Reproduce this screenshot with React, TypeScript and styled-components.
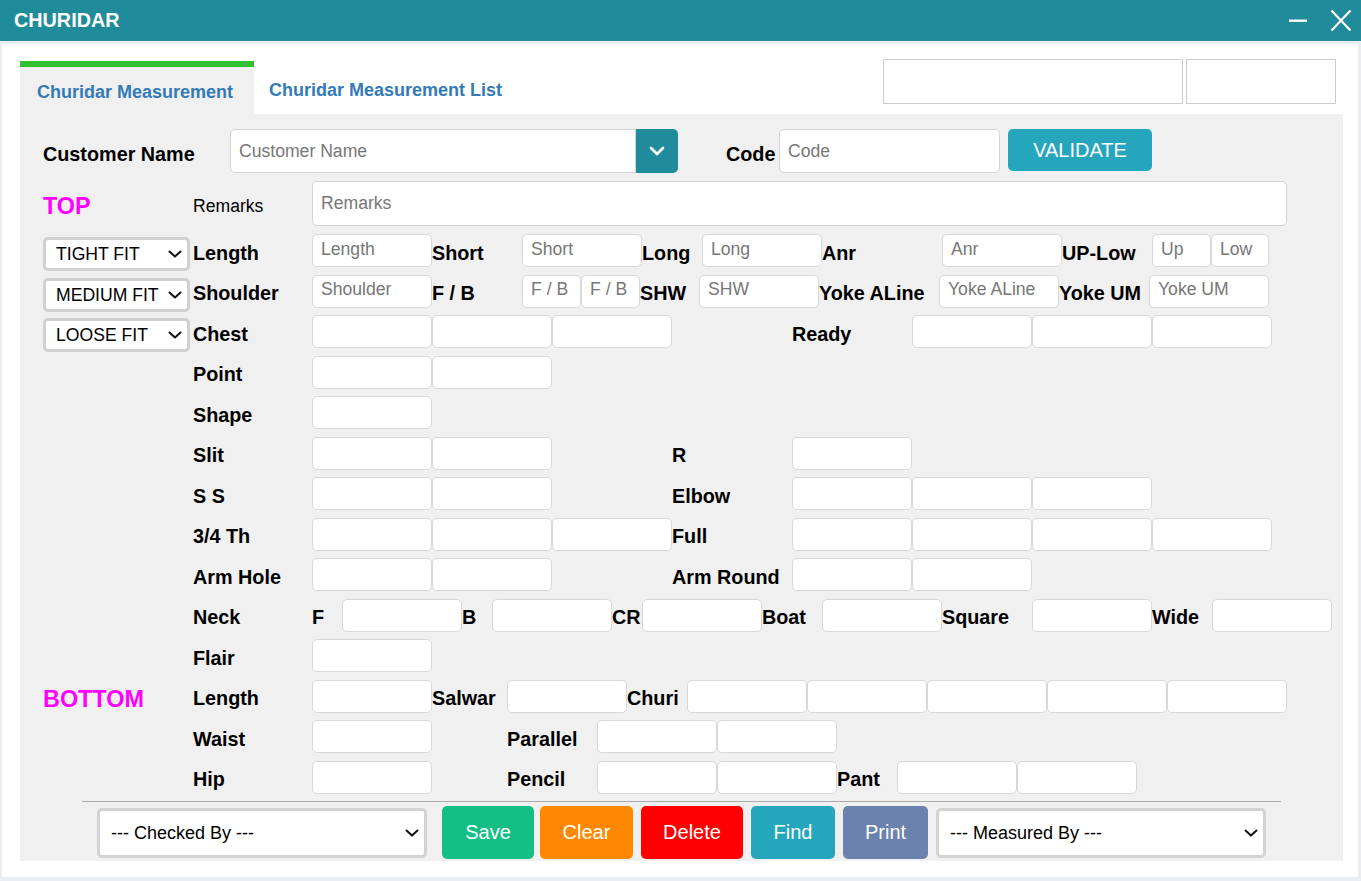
import React from "react";
import styled, { createGlobalStyle } from "styled-components";

const GlobalStyle = createGlobalStyle`
  html, body { margin: 0; padding: 0; }
  body {
    font-family: "Liberation Sans", Arial, sans-serif;
    background: #e9eef1;
  }
  * { box-sizing: border-box; }
`;

const Window = styled.div`
  width: 1361px;
  height: 881px;
  display: flex;
  flex-direction: column;
  background: #e9eef1;
`;

const TitleBar = styled.div`
  height: 41px;
  flex: none;
  background: #208b9b;
  display: flex;
  align-items: center;
  justify-content: space-between;
  padding: 0 9px 0 14px;
`;

const Title = styled.div`
  color: #fff;
  font-weight: bold;
  font-size: 19.8px;
`;

const WinControls = styled.div`
  display: flex;
  align-items: center;
  gap: 23px;
`;

const Panel = styled.div`
  flex: 1;
  margin: 3px 3px 4px 2px;
  background: #fff;
  padding: 17px 15px 16px 18px;
  display: flex;
  flex-direction: column;
`;

const TabRow = styled.div`
  display: flex;
  height: 53px;
  flex: none;
`;

const Tab = styled.div<{ $active?: boolean }>`
  width: ${(p) => (p.$active ? "234px" : "auto")};
  background: ${(p) => (p.$active ? "#f0f0f0" : "transparent")};
  border-top: ${(p) => (p.$active ? "6px solid #2fc12f" : "none")};
  color: #337ab7;
  font-weight: bold;
  font-size: 18px;
  padding: ${(p) => (p.$active ? "15px 0 0 17px" : "19px 0 0 15px")};
`;

const TopBoxes = styled.div`
  margin-left: auto;
  margin-right: 7px;
  margin-top: -2px;
  display: flex;
  gap: 3px;
  align-self: flex-start;
`;

const TopBox = styled.div<{ $w: number }>`
  width: ${(p) => p.$w}px;
  height: 45px;
  border: 1px solid #ccc;
  background: #fff;
`;

const Content = styled.div`
  flex: 1;
  width: 1323px;
  background: #f0f0f0;
  padding: 15px 0 0 23px;
  display: flex;
  flex-direction: column;
`;

const CustomerRow = styled.div`
  display: flex;
  align-items: center;
  height: 44px;
`;

const BigLabel = styled.div<{ $w: number }>`
  width: ${(p) => p.$w}px;
  font-weight: bold;
  font-size: 19.8px;
  color: #000;
  padding-top: 6px;
`;

const TextBox = styled.input<{ $w: number; $h: number; $r?: string }>`
  width: ${(p) => p.$w}px;
  height: ${(p) => p.$h}px;
  border: 1px solid #d4d4d4;
  border-radius: ${(p) => p.$r ?? "5px"};
  background: #fff;
  font-family: "Liberation Sans", Arial, sans-serif;
  font-size: 17.6px;
  padding: 0 0 0 8px;
  outline: none;
  &::placeholder { color: #777; }
`;

const DropBtn = styled.div`
  width: 42px;
  height: 44px;
  background: #208b9b;
  border-radius: 0 5px 5px 0;
  display: flex;
  align-items: center;
  justify-content: center;
`;

const CodeLabel = styled(BigLabel)`
  margin-left: 48px;
`;

const ValidateBtn = styled.button`
  margin-left: 8px;
  width: 144px;
  height: 42px;
  border: none;
  border-radius: 5px;
  background: #26a6bc;
  color: #fff;
  font-family: "Liberation Sans", Arial, sans-serif;
  font-size: 20px;
  margin-top: -2px;
`;

const RemarksRow = styled.div`
  display: flex;
  align-items: center;
  height: 45px;
  margin-top: 8px;
  margin-bottom: 8px;
`;

const LeftCell = styled.div`
  width: 150px;
  flex: none;
  display: flex;
  align-items: flex-start;
`;

const Section = styled.div<{ $pt: number }>`
  color: #ff00ff;
  font-weight: bold;
  font-size: 23.4px;
  padding-top: ${(p) => p.$pt}px;
`;

const PlainLabel = styled.div`
  width: 119px;
  font-size: 17.6px;
  color: #000;
  padding-top: 6px;
`;

const Row = styled.div`
  display: flex;
  align-items: flex-start;
  height: 40.5px;
`;

const Cell = styled.div`
  display: flex;
  align-items: flex-start;
`;

const Lbl = styled.div<{ $w: number }>`
  width: ${(p) => p.$w}px;
  flex: none;
  height: 38px;
  display: flex;
  align-items: center;
  font-weight: bold;
  font-size: 19.8px;
  color: #000;
  white-space: nowrap;
`;

const Spacer = styled.div<{ $w: number }>`
  width: ${(p) => p.$w}px;
  flex: none;
`;

const Inp = styled.input<{ $w: number }>`
  width: ${(p) => p.$w}px;
  height: 33px;
  flex: none;
  border: 1px solid #d8d8d8;
  border-radius: 5px;
  background: #fff;
  font-family: "Liberation Sans", Arial, sans-serif;
  font-size: 17.6px;
  padding: 0 0 3px 8px;
  outline: none;
  &::placeholder { color: #777; }
`;

const SelectWrap = styled.div<{ $w: number; $h: number; $mt?: number; $ml?: number }>`
  position: relative;
  width: ${(p) => p.$w}px;
  height: ${(p) => p.$h}px;
  margin-top: ${(p) => p.$mt ?? 0}px;
  margin-left: ${(p) => p.$ml ?? 0}px;
  flex: none;
`;

const NativeSelect = styled.select<{ $fs: number; $pl: number; $bc: string }>`
  appearance: none;
  -webkit-appearance: none;
  width: 100%;
  height: 100%;
  border: 3px solid ${(p) => p.$bc};
  border-radius: 5px;
  background: #fff;
  font-family: "Liberation Sans", Arial, sans-serif;
  font-size: ${(p) => p.$fs}px;
  color: #000;
  padding: 0 24px 0 ${(p) => p.$pl}px;
  outline: none;
`;

const Chevron = styled.svg`
  position: absolute;
  right: 8px;
  top: 50%;
  margin-top: -4px;
  pointer-events: none;
`;

const Separator = styled.div`
  margin-left: 39px;
  width: 1199px;
  height: 1px;
  background: #a9a9a9;
`;

const Footer = styled.div`
  display: flex;
  align-items: center;
  padding: 2px 0 0 54px;
  height: 59px;
`;

const ActBtn = styled.button<{ $bg: string; $w: number; $ml: number }>`
  width: ${(p) => p.$w}px;
  margin-left: ${(p) => p.$ml}px;
  height: 53px;
  border: none;
  border-radius: 5px;
  background: ${(p) => p.$bg};
  color: #fff;
  font-family: "Liberation Sans", Arial, sans-serif;
  font-size: 20px;
`;

type Item =
  | { l: string; w: number }
  | { i: true; w?: number; p?: string }
  | { s: number };

const L = (t: string, w: number): Item => ({ l: t, w });
const I = (p?: string, w = 120): Item => ({ i: true, w, p });
const S = (w: number): Item => ({ s: w });

type RowDef = { left?: React.ReactNode; items: Item[] };

const ChevronIcon = () => (
  <Chevron width="14" height="8" viewBox="0 0 14 8">
    <path d="M1.5 1.5 L7 6.5 L12.5 1.5" stroke="#111" strokeWidth="2" fill="none" strokeLinecap="round" strokeLinejoin="round" />
  </Chevron>
);

const Dropdown = ({
  text,
  w,
  h,
  fs,
  pl,
  bc,
  mt,
  ml,
}: {
  text: string;
  w: number;
  h: number;
  fs: number;
  pl: number;
  bc: string;
  mt?: number;
  ml?: number;
}) => (
  <SelectWrap $w={w} $h={h} $mt={mt} $ml={ml}>
    <NativeSelect $fs={fs} $pl={pl} $bc={bc} defaultValue={text}>
      <option>{text}</option>
    </NativeSelect>
    <ChevronIcon />
  </SelectWrap>
);

const fit = (t: string) => <Dropdown text={t} w={147} h={34} fs={17.6} pl={10} bc="#d0d0d0" mt={3} />;

const rows: RowDef[] = [
  {
    left: fit("TIGHT FIT"),
    items: [L("Length", 119), I("Length"), L("Short", 90), I("Short"), L("Long", 60), I("Long"), L("Anr", 120), I("Anr"), L("UP-Low", 90), I("Up", 59), I("Low", 58)],
  },
  {
    left: fit("MEDIUM FIT"),
    items: [L("Shoulder", 119), I("Shoulder"), L("F / B", 90), I("F / B", 59), I("F / B", 59), L("SHW", 59), I("SHW"), L("Yoke ALine", 120), I("Yoke ALine"), L("Yoke UM", 90), I("Yoke UM")],
  },
  {
    left: fit("LOOSE FIT"),
    items: [L("Chest", 119), I(), I(), I(), S(120), L("Ready", 120), I(), I(), I()],
  },
  { items: [L("Point", 119), I(), I()] },
  { items: [L("Shape", 119), I()] },
  { items: [L("Slit", 119), I(), I(), S(120), L("R", 120), I()] },
  { items: [L("S S", 119), I(), I(), S(120), L("Elbow", 120), I(), I(), I()] },
  { items: [L("3/4 Th", 119), I(), I(), I(), L("Full", 120), I(), I(), I(), I()] },
  { items: [L("Arm Hole", 119), I(), I(), S(120), L("Arm Round", 120), I(), I()] },
  {
    items: [L("Neck", 119), L("F", 30), I(), L("B", 30), I(), L("CR", 30), I(), L("Boat", 60), I(), L("Square", 90), I(), L("Wide", 60), I()],
  },
  { items: [L("Flair", 119), I()] },
  {
    left: <Section $pt={6}>BOTTOM</Section>,
    items: [L("Length", 119), I(), L("Salwar", 75), I(), L("Churi", 60), I(), I(), I(), I(), I()],
  },
  { items: [L("Waist", 119), I(), S(75), L("Parallel", 90), I(), I()] },
  { items: [L("Hip", 119), I(), S(75), L("Pencil", 90), I(), I(), L("Pant", 60), I(), I()] },
];

const renderItem = (it: Item, k: number) => {
  if ("l" in it) return <Lbl key={k} $w={it.w}>{it.l}</Lbl>;
  if ("s" in it) return <Spacer key={k} $w={it.s} />;
  return <Inp key={k} $w={it.w ?? 120} placeholder={it.p} />;
};

export default function App() {
  return (
    <>
      <GlobalStyle />
      <Window>
        <TitleBar>
          <Title>CHURIDAR</Title>
          <WinControls>
            <svg width="18" height="4" viewBox="0 0 18 4">
              <rect x="0" y="0.5" width="18" height="2.4" fill="#fff" />
            </svg>
            <svg width="22" height="23" viewBox="0 0 22 23">
              <path d="M1.5 1.5 L20.5 21.5 M20.5 1.5 L1.5 21.5" stroke="#fff" strokeWidth="2.2" fill="none" />
            </svg>
          </WinControls>
        </TitleBar>
        <Panel>
          <TabRow>
            <Tab $active>Churidar Measurement</Tab>
            <Tab>Churidar Measurement List</Tab>
            <TopBoxes>
              <TopBox $w={300} />
              <TopBox $w={150} />
            </TopBoxes>
          </TabRow>
          <Content>
            <CustomerRow>
              <BigLabel $w={187}>Customer Name</BigLabel>
              <TextBox $w={406} $h={44} $r="5px 0 0 5px" placeholder="Customer Name" />
              <DropBtn>
                <svg width="16" height="10" viewBox="0 0 16 10">
                  <path d="M2 2 L8 8 L14 2" stroke="#fff" strokeWidth="2.6" fill="none" strokeLinecap="round" strokeLinejoin="round" />
                </svg>
              </DropBtn>
              <CodeLabel $w={53}>Code</CodeLabel>
              <TextBox $w={221} $h={44} placeholder="Code" />
              <ValidateBtn>VALIDATE</ValidateBtn>
            </CustomerRow>
            <RemarksRow>
              <LeftCell>
                <Section $pt={5}>TOP</Section>
              </LeftCell>
              <PlainLabel>Remarks</PlainLabel>
              <TextBox $w={975} $h={45} placeholder="Remarks" />
            </RemarksRow>
            {rows.map((r, ri) => (
              <Row key={ri}>
                <LeftCell>{r.left}</LeftCell>
                <Cell>{r.items.map(renderItem)}</Cell>
              </Row>
            ))}
            <Separator />
            <Footer>
              <Dropdown text="--- Checked By ---" w={330} h={50} fs={18} pl={11} bc="#d3d3d3" />
              <ActBtn $bg="#13bf84" $w={92} $ml={15}>Save</ActBtn>
              <ActBtn $bg="#ff8800" $w={93} $ml={6}>Clear</ActBtn>
              <ActBtn $bg="#ff0000" $w={102} $ml={8}>Delete</ActBtn>
              <ActBtn $bg="#26a6bc" $w={84} $ml={8}>Find</ActBtn>
              <ActBtn $bg="#6a82ad" $w={85} $ml={8}>Print</ActBtn>
              <Dropdown text="--- Measured By ---" w={330} h={50} fs={18} pl={11} bc="#d3d3d3" ml={8} />
            </Footer>
          </Content>
        </Panel>
      </Window>
    </>
  );
}
